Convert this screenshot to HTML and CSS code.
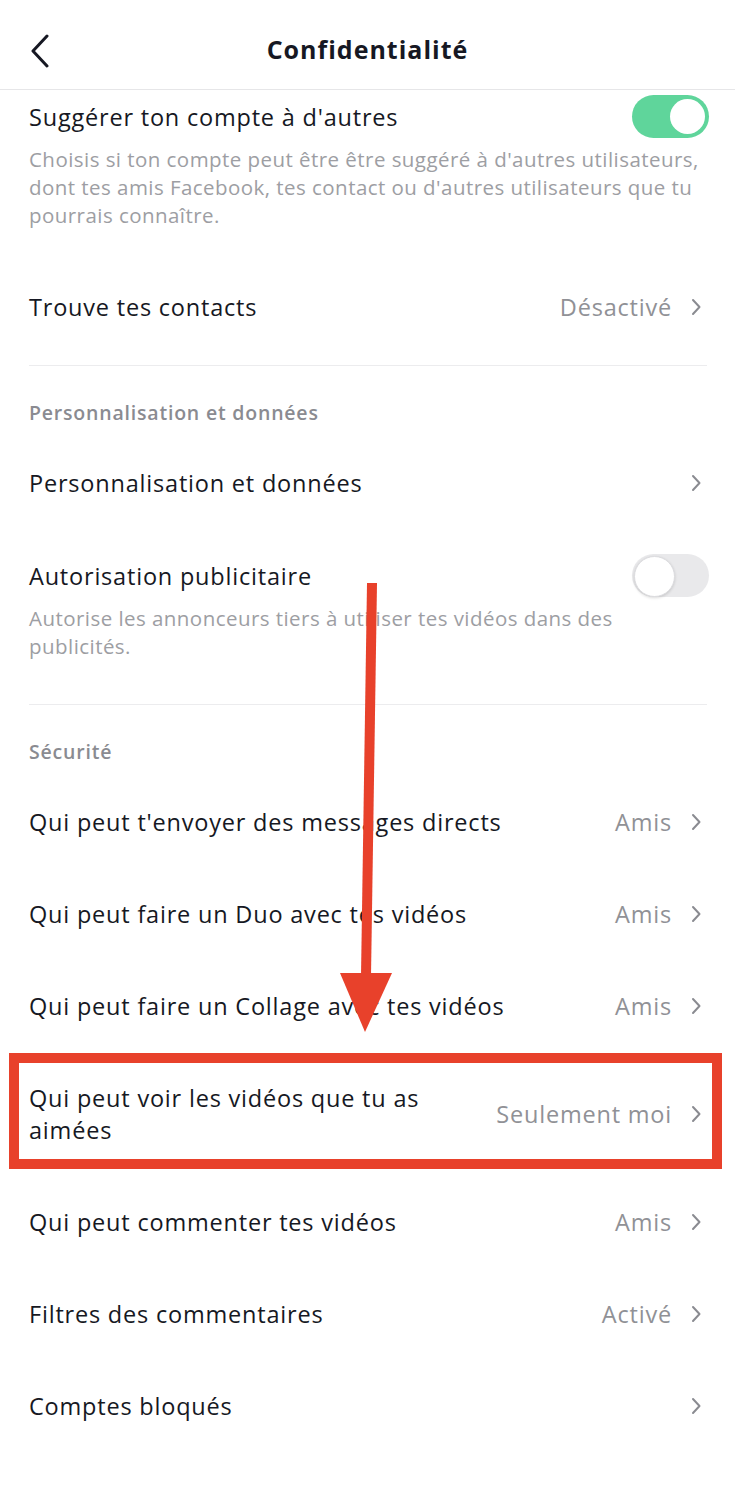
FILE: index.html
```html
<!DOCTYPE html>
<html lang="fr">
<head>
  <meta charset="UTF-8">
  <title>Confidentialité</title>
  <link rel="stylesheet" href="styles.css">
</head>
<body>
  <div class="page">

    <!-- Top bar -->
    <header class="topbar">
      <svg class="back" width="22" height="34" viewBox="0 0 22 34">
        <path d="M18 2 L4 17 L18 32" fill="none" stroke="#161823" stroke-width="3" stroke-linecap="round" stroke-linejoin="round"/>
      </svg>
      <h1>Confidentialité</h1>
    </header>

    <main class="settings">

      <div class="item item-toggle item-first">
        <div class="item-main">
          <span class="item-title">Suggérer ton compte à d'autres</span>
          <span class="switch on"></span>
        </div>
        <p class="item-desc">Choisis si ton compte peut être être suggéré à d'autres utilisateurs, dont tes amis Facebook, tes contact ou d'autres utilisateurs que tu pourrais connaître.</p>
      </div>

      <div class="item item-link">
        <span class="item-title">Trouve tes contacts</span>
        <span class="item-value">Désactivé</span>
        <svg class="chevron" width="12" height="20" viewBox="0 0 12 20"><path d="M3 3 L9.5 10 L3 17" fill="none" stroke="#8a8b91" stroke-width="2" stroke-linecap="round" stroke-linejoin="round"/></svg>
      </div>

      <hr class="divider">
      <div class="section-label">Personnalisation et données</div>

      <div class="item item-link">
        <span class="item-title">Personnalisation et données</span>
        <svg class="chevron" width="12" height="20" viewBox="0 0 12 20"><path d="M3 3 L9.5 10 L3 17" fill="none" stroke="#8a8b91" stroke-width="2" stroke-linecap="round" stroke-linejoin="round"/></svg>
      </div>

      <div class="item item-toggle">
        <div class="item-main">
          <span class="item-title">Autorisation publicitaire</span>
          <span class="switch"></span>
        </div>
        <p class="item-desc">Autorise les annonceurs tiers à utiliser tes vidéos dans des publicités.</p>
      </div>

      <hr class="divider">
      <div class="section-label">Sécurité</div>

      <div class="item item-link">
        <span class="item-title">Qui peut t'envoyer des messages directs</span>
        <span class="item-value">Amis</span>
        <svg class="chevron" width="12" height="20" viewBox="0 0 12 20"><path d="M3 3 L9.5 10 L3 17" fill="none" stroke="#8a8b91" stroke-width="2" stroke-linecap="round" stroke-linejoin="round"/></svg>
      </div>

      <div class="item item-link">
        <span class="item-title">Qui peut faire un Duo avec tes vidéos</span>
        <span class="item-value">Amis</span>
        <svg class="chevron" width="12" height="20" viewBox="0 0 12 20"><path d="M3 3 L9.5 10 L3 17" fill="none" stroke="#8a8b91" stroke-width="2" stroke-linecap="round" stroke-linejoin="round"/></svg>
      </div>

      <div class="item item-link">
        <span class="item-title">Qui peut faire un Collage avec tes vidéos</span>
        <span class="item-value">Amis</span>
        <svg class="chevron" width="12" height="20" viewBox="0 0 12 20"><path d="M3 3 L9.5 10 L3 17" fill="none" stroke="#8a8b91" stroke-width="2" stroke-linecap="round" stroke-linejoin="round"/></svg>
      </div>

      <div class="item item-link item-tall">
        <span class="item-title">Qui peut voir les vidéos que tu as aimées</span>
        <span class="item-value">Seulement moi</span>
        <svg class="chevron" width="12" height="20" viewBox="0 0 12 20"><path d="M3 3 L9.5 10 L3 17" fill="none" stroke="#8a8b91" stroke-width="2" stroke-linecap="round" stroke-linejoin="round"/></svg>
      </div>

      <div class="item item-link">
        <span class="item-title">Qui peut commenter tes vidéos</span>
        <span class="item-value">Amis</span>
        <svg class="chevron" width="12" height="20" viewBox="0 0 12 20"><path d="M3 3 L9.5 10 L3 17" fill="none" stroke="#8a8b91" stroke-width="2" stroke-linecap="round" stroke-linejoin="round"/></svg>
      </div>

      <div class="item item-link">
        <span class="item-title">Filtres des commentaires</span>
        <span class="item-value">Activé</span>
        <svg class="chevron" width="12" height="20" viewBox="0 0 12 20"><path d="M3 3 L9.5 10 L3 17" fill="none" stroke="#8a8b91" stroke-width="2" stroke-linecap="round" stroke-linejoin="round"/></svg>
      </div>

      <div class="item item-link">
        <span class="item-title">Comptes bloqués</span>
        <svg class="chevron" width="12" height="20" viewBox="0 0 12 20"><path d="M3 3 L9.5 10 L3 17" fill="none" stroke="#8a8b91" stroke-width="2" stroke-linecap="round" stroke-linejoin="round"/></svg>
      </div>

    </main>

    <!-- Annotation drawn over the screenshot -->
    <svg class="annotation" width="735" height="1500" viewBox="0 0 735 1500">
      <path d="M367 583 L377 583 L371 976 L361 976 Z" fill="#e8412b"/>
      <path d="M340 973 L392 973 L365 1032 Z" fill="#e8412b"/>
    </svg>
    <div class="highlight"></div>

  </div>
</body>
</html>
```

FILE: styles.css
```css
* {
  box-sizing: border-box;
}

body {
  margin: 0;
  padding: 0;
  background-color: #fff;
  color: #161823;
  font-family: "Open Sans", "Liberation Sans", sans-serif;
}

.page {
  position: relative;
  width: 735px;
  min-height: 1500px;
  overflow: hidden;
}

/* Top bar */
.topbar {
  height: 90px;
  display: flex;
  align-items: center;
  justify-content: center;
  position: relative;
  border-bottom: 1px solid #e6e6e8;
}

.topbar h1 {
  margin: 0 0 -8px;
  font-size: 25px;
  font-weight: 700;
  letter-spacing: 1px;
}

.back {
  position: absolute;
  left: 29px;
  top: 34px;
}

/* Settings list */
.settings {
  padding: 0 28px 0 29px;
}

.item-title {
  font-size: 23.5px;
  line-height: 32px;
  letter-spacing: 0.8px;
}

.item-toggle {
  padding: 25px 0 32px;
}

.item-first {
  padding-top: 5px;
}

.item-main {
  display: flex;
  align-items: center;
  justify-content: space-between;
  height: 43px;
}

.item-desc {
  margin: 7px 0 0;
  font-size: 20.5px;
  line-height: 28px;
  letter-spacing: 0.45px;
  color: #9d9ea3;
}

.item-link {
  display: flex;
  align-items: center;
  height: 92px;
}

.item-link .item-title {
  flex: 1;
  padding-right: 24px;
}

.item-tall {
  height: 124px;
}

.item-value {
  font-size: 23.5px;
  letter-spacing: 0.8px;
  color: #909196;
  margin-right: 18px;
}

.chevron {
  flex-shrink: 0;
  margin-right: 5px;
}

.divider {
  border: none;
  border-top: 1px solid #ececee;
  margin: 12px 0 0;
}

.section-label {
  padding: 35px 0 12px;
  font-size: 19.5px;
  line-height: 24px;
  font-weight: 600;
  letter-spacing: 0.8px;
  color: #8a8b91;
}

/* Switches */
.switch {
  position: relative;
  width: 77px;
  height: 43px;
  border-radius: 22px;
  background-color: #e9e9eb;
  flex-shrink: 0;
  margin-right: -2px;
}

.switch::after {
  content: "";
  position: absolute;
  top: 2px;
  left: 2px;
  width: 39px;
  height: 39px;
  border-radius: 50%;
  background-color: #fff;
  border: 1px solid #dcdcdf;
  box-shadow: 0 1px 3px rgba(0, 0, 0, 0.15);
}

.switch.on {
  background-color: #5fd59b;
}

.switch.on::after {
  left: auto;
  right: 4px;
  top: 4px;
  width: 35px;
  height: 35px;
  border: none;
  box-shadow: none;
}

/* Annotation overlay */
.annotation {
  position: absolute;
  top: 0;
  left: 0;
  pointer-events: none;
}

.highlight {
  position: absolute;
  left: 9px;
  top: 1053px;
  width: 713px;
  height: 116px;
  border: 10px solid #e8412b;
  pointer-events: none;
}
```
